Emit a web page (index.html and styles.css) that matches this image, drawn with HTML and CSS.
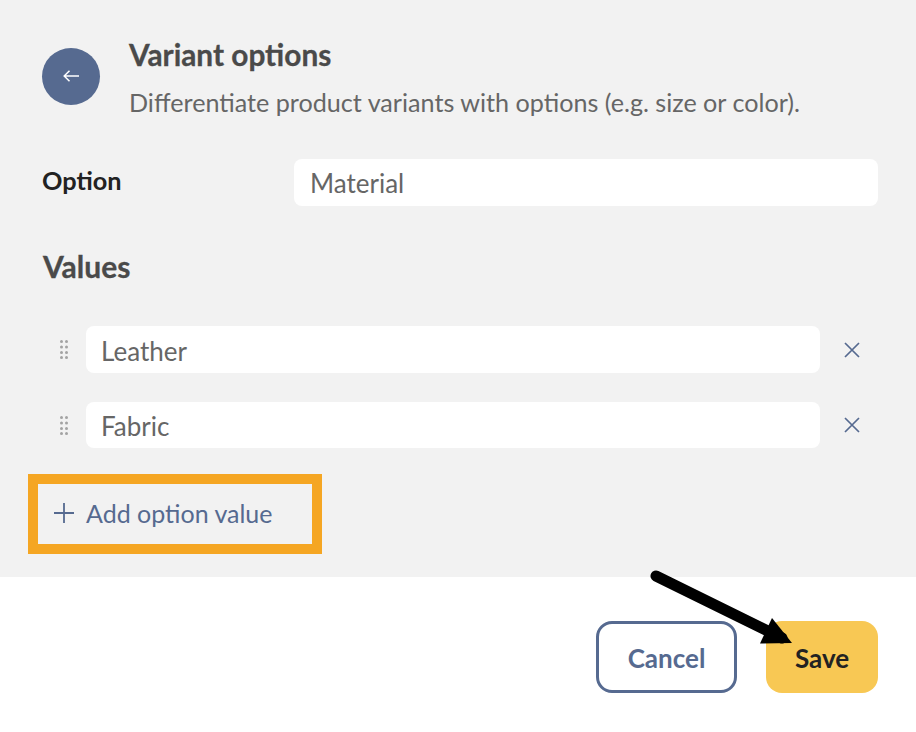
FILE: index.html
```html
<!DOCTYPE html>
<html lang="en">
<head>
<meta charset="utf-8">
<title>Variant options</title>
<link rel="stylesheet" href="styles.css">
</head>
<body>
<main class="page">
  <section class="panel">
    <header class="header">
      <button class="back" aria-label="Back">
        <svg width="16" height="12" viewBox="0 0 16 12" fill="none" stroke="#fff" stroke-width="1.5"><path d="M16 6H1.2M6.500 .8 1.200 6l5.300 5.200"/></svg>
      </button>
      <div class="heading">
        <h1 class="title">Variant options</h1>
        <p class="subtitle">Differentiate product variants with options (e.g. size or color).</p>
      </div>
    </header>
    <div class="option-row">
      <label class="option-label">Option</label>
      <div class="field option-field">Material</div>
    </div>
    <h2 class="values-title">Values</h2>
    <div class="values">
      <div class="value-row">
        <svg class="grip" width="8" height="19" viewBox="0 0 8 19" fill="#a3a3a3"><circle cx="1.500" cy="1.500" r="1.500"/><circle cx="6.500" cy="1.500" r="1.500"/><circle cx="1.500" cy="7" r="1.500"/><circle cx="6.500" cy="7" r="1.500"/><circle cx="1.500" cy="12.500" r="1.500"/><circle cx="6.500" cy="12.500" r="1.500"/><circle cx="1.500" cy="17.500" r="1.500"/><circle cx="6.500" cy="17.500" r="1.500"/></svg>
        <div class="field value-field">Leather</div>
        <svg class="remove" width="16" height="16" viewBox="0 0 16 16" fill="none" stroke="#566a90" stroke-width="1.7"><path d="M1 1l14 14M15 1 1 15"/></svg>
      </div>
      <div class="value-row second">
        <svg class="grip" width="8" height="19" viewBox="0 0 8 19" fill="#a3a3a3"><circle cx="1.500" cy="1.500" r="1.500"/><circle cx="6.500" cy="1.500" r="1.500"/><circle cx="1.500" cy="7" r="1.500"/><circle cx="6.500" cy="7" r="1.500"/><circle cx="1.500" cy="12.500" r="1.500"/><circle cx="6.500" cy="12.500" r="1.500"/><circle cx="1.500" cy="17.500" r="1.500"/><circle cx="6.500" cy="17.500" r="1.500"/></svg>
        <div class="field value-field">Fabric</div>
        <svg class="remove" width="16" height="16" viewBox="0 0 16 16" fill="none" stroke="#566a90" stroke-width="1.7"><path d="M1 1l14 14M15 1 1 15"/></svg>
      </div>
    </div>
    <div class="add-box">
      <svg width="20" height="20" viewBox="0 0 20 20" fill="none" stroke="#566a90" stroke-width="1.8"><path d="M10 0v20M0 10h20"/></svg>
      <span class="add-text">Add option value</span>
    </div>
  </section>
  <footer class="footer">
    <button class="btn cancel">Cancel</button>
    <button class="btn save">Save</button>
  </footer>
  <svg class="arrow" width="916" height="732" viewBox="0 0 916 732" aria-hidden="true">
    <path d="M656 576 782 638" stroke="#000" stroke-width="11" stroke-linecap="round" fill="none"/>
    <path d="M772 618 792 643 760 643.500Z" fill="#000"/>
  </svg>
</main>
</body>
</html>
```
FILE: styles.css
```css
* { box-sizing: border-box; }
html, body { margin: 0; padding: 0; background: #fff; }
body { font-family: Lato, "Liberation Sans", sans-serif; }
.page { position: relative; width: 916px; height: 732px; overflow: hidden; }
.panel { height: 577px; background: #f2f2f2; padding: 38px 38px 0 42px; }
.header { display: flex; align-items: flex-start; gap: 29px; }
.back { width: 58px; height: 57px; margin-top: 10px; padding: 0 0 1px; border: 0; border-radius: 50%; background: #566a90; display: flex; align-items: center; justify-content: center; flex: none; }
.title { margin: 1px 0 0; font-size: 29.8px; line-height: 32px; font-weight: 700; color: #4a4a4a; -webkit-text-stroke: .3px #4a4a4a; }
.subtitle { margin: 15px 0 0; font-size: 25.15px; line-height: 32px; color: #666; white-space: nowrap; }
.option-row { display: flex; align-items: flex-start; margin-top: 41px; }
.option-label { width: 252px; flex: none; font-size: 25.3px; line-height: 42px; font-weight: 700; color: #222; }
.field { background: #fff; border-radius: 8px; font-size: 26px; color: #666; display: flex; align-items: center; }
.option-field { flex: 1; height: 47px; padding: 0 16px; }
.values-title { margin: 39px 0 0; padding-left: 1px; font-size: 30px; line-height: 42px; font-weight: 700; color: #4a4a4a; -webkit-text-stroke: .3px #4a4a4a; }
.values { margin-top: 39px; }
.value-row { display: flex; align-items: center; height: 47px; }
.value-row.second { margin-top: 29px; height: 46px; }
.grip { margin-left: 18px; flex: none; }
.value-field { width: 734px; height: 100%; margin-left: 18px; padding: 2px 15px 0; flex: none; }
.remove { margin-left: 24px; flex: none; }
.add-box { display: flex; align-items: center; gap: 12px; width: 294px; height: 80px; margin: 26px 0 0 -14px; border: 10px solid #f5a623; padding: 0 0 2px 16px; }
.add-text { font-size: 25px; color: #566a90; }
.footer { display: flex; justify-content: flex-end; gap: 29px; padding: 44px 38px 0 0; }
.btn { height: 72px; border-radius: 16px; font-family: inherit; font-size: 26px; font-weight: 700; padding: 2px 0 0; }
.cancel { width: 141px; background: #fff; border: 3px solid #566a90; color: #566a90; }
.save { width: 112px; background: #f8c854; border: 0; color: #222; }
.arrow { position: absolute; left: 0; top: 0; pointer-events: none; }
```
